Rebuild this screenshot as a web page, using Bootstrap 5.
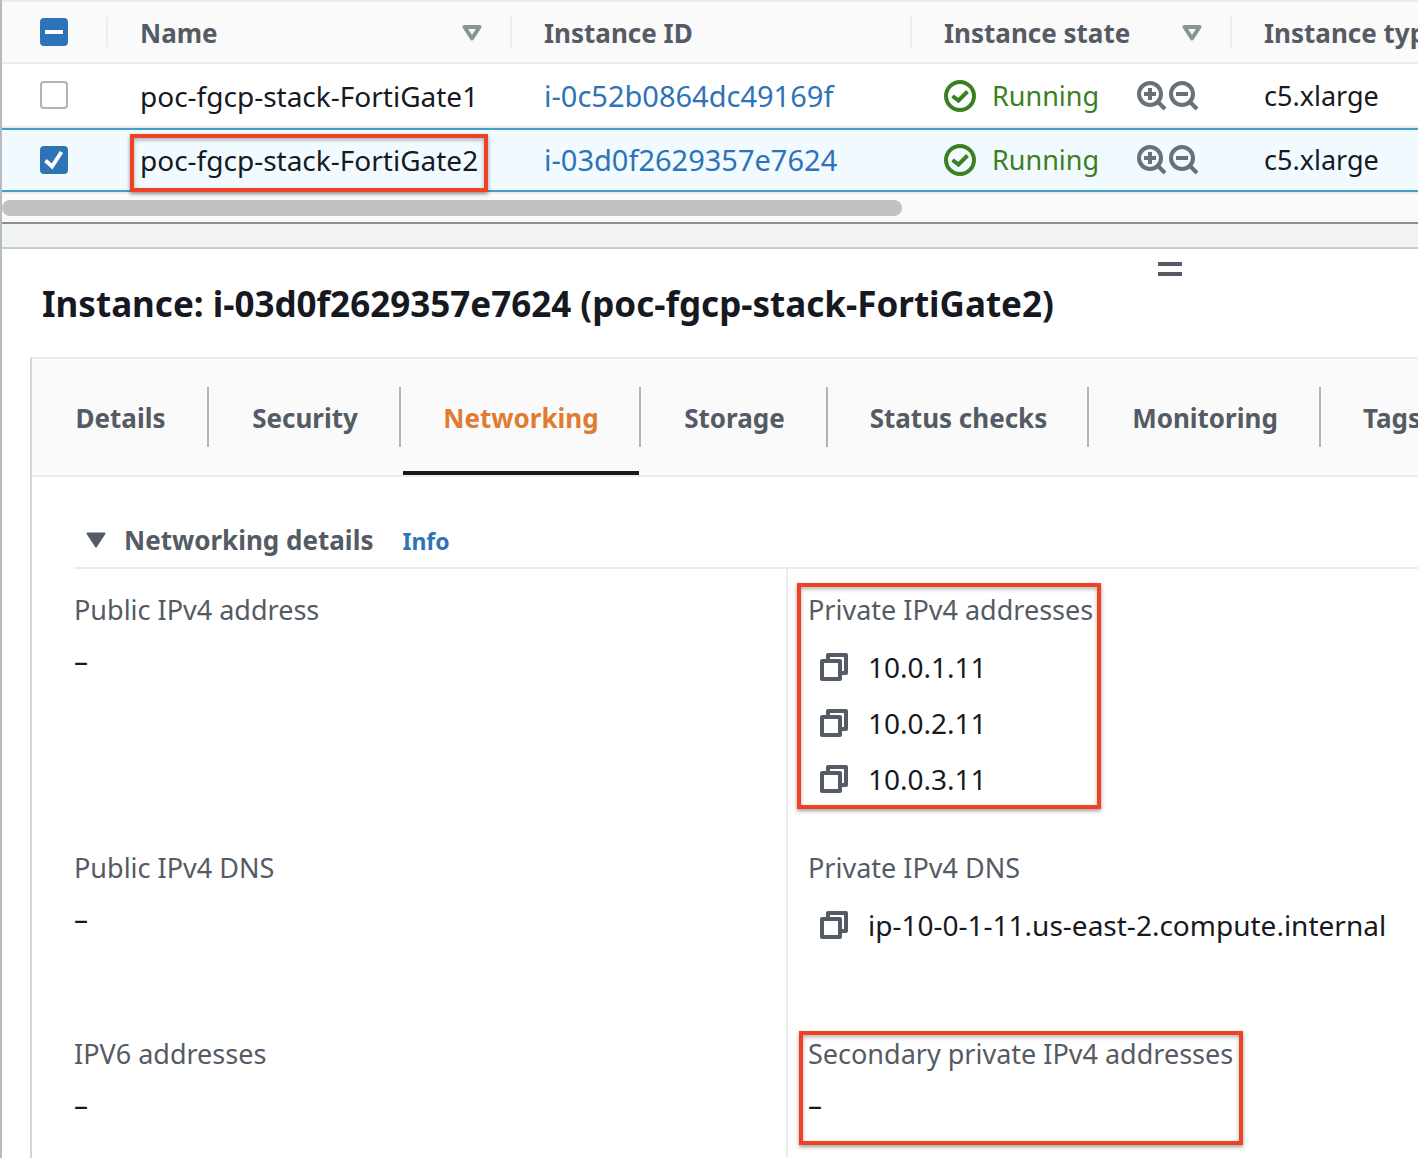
<!DOCTYPE html>
<html lang="en">
<head>
<meta charset="utf-8">
<meta name="viewport" content="width=device-width, initial-scale=1">
<title>Instances</title>
<link href="https://cdn.jsdelivr.net/npm/bootstrap@5.3.0/dist/css/bootstrap.min.css" rel="stylesheet">
<style>
:root { --ink:#16191f; --slate:#545b64; --line:#eaeded; --blue:#2e73b8; --red:#ef4123; }
body { font-family:"Noto Sans","Open Sans",sans-serif; font-size:27px; line-height:36px; color:var(--ink); min-height:100vh; overflow-x:hidden; border-left:2px solid #b5bbbf; }
a { color:var(--blue); text-decoration:none; }
svg { display:block; flex:none; }

.instances { table-layout:fixed; border-collapse:separate; border-spacing:0; margin:0; border-top:2px solid var(--line); white-space:nowrap; color:var(--ink); }
.instances th, .instances td { height:64px; padding:2px 0 0 32px; border:0; vertical-align:middle; color:inherit; overflow:hidden; position:relative; }
.instances th { height:62px; font-size:26px; background:#fafafa; color:var(--slate); border-bottom:2px solid var(--line); }
.instances td { border-bottom:2px solid var(--line); }
.instances th:not(:last-child)::after { content:""; position:absolute; right:0; top:15px; height:30px; width:2px; background:var(--line); }
.instances .pick-col { padding:0 0 0 38px; }
.instances .chosen td { background:#f1faff; padding-top:0; border-top:2px solid #479fc8; border-bottom:2px solid #479fc8; overflow:visible; }
.instances .chosen td:first-child { box-shadow:-2px 0 #3d86a8; }
.instances .res-name { font-size:28px; }
.instances .res-id { font-size:29px; }
.w-pick { width:106px; } .w-name { width:404px; } .w-id { width:400px; } .w-state { width:320px; }
.form-check-input { display:block; width:28px; height:28px; margin:0; border:2px solid #aab7b8; border-radius:4px; }
.form-check-input[type=checkbox] { border-radius:4px; }
.form-check-input:checked, .form-check-input[type=checkbox]:indeterminate { background-color:var(--blue); border-color:var(--blue); background-size:28px 28px; background-position:center; }
.form-check-input:checked[type=checkbox] { background-image:url("data:image/svg+xml,%3Csvg xmlns='http://www.w3.org/2000/svg' viewBox='0 0 28 28'%3E%3Cpath d='M5.500 14.500l6.500 6L21.500 6' fill='none' stroke='%23fff' stroke-width='4'/%3E%3C/svg%3E"); }
.form-check-input[type=checkbox]:indeterminate { background-image:url("data:image/svg+xml,%3Csvg xmlns='http://www.w3.org/2000/svg' viewBox='0 0 28 28'%3E%3Cpath d='M5 14h18' stroke='%23fff' stroke-width='4'/%3E%3C/svg%3E"); }
.sorter { padding-right:30px; }
.running { color:#3a8020; }
.zoomers { margin-left:38px; gap:2px; }
.zoomers .btn { color:#687078; }

.track { height:32px; padding:6px 0; background:#fafafa; border-top:2px solid var(--line); border-bottom:2px solid #879196; }
.thumb { width:900px; max-width:100%; height:16px; border-radius:8px; background:#c1c1c1; }
.splitter { height:25px; background:#f2f3f3; border-bottom:2px solid #c5cccc; }

.grip { margin:12px auto 0; padding:0; width:26px; }
.grip-row { padding-left:920px; }
.panel-title { font-size:35px; line-height:46px; margin:4px 0 30px 40px; font-weight:700; white-space:nowrap; }
.sheet { margin-left:28px; border-left:2px solid #d0d5d8; border-top:2px solid var(--line); }
.tabs { background:#fafafa; height:118px; border-bottom:2px solid var(--line); overflow:hidden; }
.tabs .nav-link { position:relative; flex:none; height:116px; padding:2px 0 0; border:0; background:none; border-radius:0; font-size:26px; color:var(--slate); font-weight:700; white-space:nowrap; }
.tabs .nav-link::after { content:""; position:absolute; right:0; top:28px; width:2px; height:60px; background:#aab7b8; }
.tabs .nav-link.active { color:#e07b2f; }
.tabs .nav-link.active::before { content:""; position:absolute; left:2px; right:2px; bottom:0; height:4px; background:#16191f; }
.t-details{width:177px}.t-security{width:192px}.t-network{width:240px}.t-storage{width:187px}.t-status{width:261px}.t-monitor{width:232px}.t-tags{width:142px}
.sec-head { margin-left:42px; padding:44px 0 8px 12px; height:92px; border-bottom:2px solid var(--line); }
.sec-title { font-size:26px; line-height:36px; font-weight:700; color:var(--slate); margin:0 29px 0 18px; }
.info { font-size:23px; font-weight:700; padding-top:2px; }
.pairs { margin:0 0 0 42px; display:grid; grid-template-columns:712px 1fr; grid-template-rows:max-content max-content 1fr; }
.pair { min-height:186px; padding:0 0 42px; white-space:nowrap; }
.pair:nth-child(-n+2) { padding-top:22px; }
.pair:nth-last-child(-n+2) { min-height:0; padding-bottom:30px; }
.pair:nth-child(even) { border-left:2px solid var(--line); padding-left:20px; }
.pair dt { font-weight:400; line-height:38px; color:var(--slate); margin-bottom:10px; }
.pair dd { margin:0; font-size:28px; line-height:42px; }
.pair .copyable { height:56px; padding-left:12px; gap:20px; color:var(--ink); }
.copyable .btn { color:var(--slate); }

/* highlight frames laid over the content */
.flagged { position:relative; }
.flag { position:absolute; border:4px solid var(--red); box-shadow:0 2px 4px rgba(0,0,0,.4), inset 0 2px 4px rgba(0,0,0,.3); pointer-events:none; }
.flag-name { left:22px; right:24px; top:4px; bottom:-2px; z-index:2; }
.flag-ips { left:9px; width:304px; top:14px; height:226px; }
.flag-sec { left:11px; width:444px; top:-4px; height:114px; }
</style>
<script src="https://cdn.jsdelivr.net/npm/bootstrap@5.3.0/dist/js/bootstrap.bundle.min.js"></script>
</head>
<body class="bg-white d-flex flex-column">
<svg class="d-none" aria-hidden="true">
  <symbol id="sort" viewBox="0 0 20 16"><path d="M2.500 2h15L10 13.500z" fill="none" stroke="#879596" stroke-width="4" stroke-linejoin="round"/></symbol>
  <symbol id="ok" viewBox="0 0 32 32"><g fill="none" stroke="currentColor" stroke-width="4"><circle cx="16" cy="16" r="14"/><path d="M8.500 16l6 4.500L23.500 11.500"/></g></symbol>
  <symbol id="zin" viewBox="0 0 30 30"><g fill="none" stroke="currentColor" stroke-width="4"><circle cx="13" cy="13" r="11"/><path d="M21 21l7 7M13 7v12M7 13h12"/></g></symbol>
  <symbol id="zout" viewBox="0 0 30 30"><g fill="none" stroke="currentColor" stroke-width="4"><circle cx="13" cy="13" r="11"/><path d="M21 21l7 7M7 13h12"/></g></symbol>
  <symbol id="copy" viewBox="0 0 28 28"><g fill="none" stroke="currentColor" stroke-width="4" stroke-linejoin="round"><path d="M2 8h18v18H2z"/><path d="M8 8V2h18v18h-6"/></g></symbol>
</svg>

<table class="table instances">
  <colgroup><col class="w-pick"><col class="w-name"><col class="w-id"><col class="w-state"><col></colgroup>
  <thead>
    <tr>
      <th class="pick-col"><input class="form-check-input" type="checkbox" id="pick-all" aria-label="Select all instances"></th>
      <th><div class="d-flex align-items-center justify-content-between sorter">Name<button class="btn p-0 border-0" aria-label="Sort by name"><svg width="20" height="16"><use href="#sort"/></svg></button></div></th>
      <th>Instance ID</th>
      <th><div class="d-flex align-items-center justify-content-between sorter">Instance state<button class="btn p-0 border-0" aria-label="Sort by state"><svg width="20" height="16"><use href="#sort"/></svg></button></div></th>
      <th>Instance type</th>
    </tr>
  </thead>
  <tbody>
    <tr>
      <td class="pick-col"><input class="form-check-input" type="checkbox" aria-label="Select FortiGate1"></td>
      <td class="res-name">poc-fgcp-stack-FortiGate1</td>
      <td class="res-id"><a href="#">i-0c52b0864dc49169f</a></td>
      <td><div class="d-flex align-items-center"><svg class="running" width="32" height="32"><use href="#ok"/></svg><span class="running ms-3">Running</span><span class="zoomers d-flex"><button class="btn p-0 border-0" aria-label="Include state"><svg width="30" height="30"><use href="#zin"/></svg></button><button class="btn p-0 border-0" aria-label="Exclude state"><svg width="30" height="30"><use href="#zout"/></svg></button></span></div></td>
      <td>c5.xlarge</td>
    </tr>
    <tr class="chosen">
      <td class="pick-col"><input class="form-check-input" type="checkbox" checked aria-label="Select FortiGate2"></td>
      <td class="res-name">poc-fgcp-stack-FortiGate2<span class="flag flag-name"></span></td>
      <td class="res-id"><a href="#">i-03d0f2629357e7624</a></td>
      <td><div class="d-flex align-items-center"><svg class="running" width="32" height="32"><use href="#ok"/></svg><span class="running ms-3">Running</span><span class="zoomers d-flex"><button class="btn p-0 border-0" aria-label="Include state"><svg width="30" height="30"><use href="#zin"/></svg></button><button class="btn p-0 border-0" aria-label="Exclude state"><svg width="30" height="30"><use href="#zout"/></svg></button></span></div></td>
      <td>c5.xlarge</td>
    </tr>
  </tbody>
</table>
<div class="track"><div class="thumb"></div></div>
<div class="splitter"></div>

<main class="flex-grow-1 d-flex flex-column">
  <div class="grip-row d-flex"><button class="btn border-0 grip" aria-label="Resize panel"><svg width="26" height="16" viewBox="0 0 26 16"><path d="M1 3h24M1 13h24" stroke="#545b64" stroke-width="4"/></svg></button></div>
  <h1 class="panel-title">Instance: i-03d0f2629357e7624 (poc-fgcp-stack-FortiGate2)</h1>
  <section class="sheet flex-grow-1 d-flex flex-column">
    <nav class="nav tabs flex-nowrap">
      <button class="nav-link t-details">Details</button>
      <button class="nav-link t-security">Security</button>
      <button class="nav-link t-network active" aria-current="page">Networking</button>
      <button class="nav-link t-storage">Storage</button>
      <button class="nav-link t-status">Status checks</button>
      <button class="nav-link t-monitor">Monitoring</button>
      <button class="nav-link t-tags">Tags</button>
    </nav>
    <div class="sec-head d-flex align-items-center">
      <button class="btn p-0 border-0" aria-label="Collapse networking details"><svg width="20" height="16" viewBox="0 0 20 16"><path d="M1.500 1.500h17L10 14.500z" fill="#545b64" stroke="#545b64" stroke-width="2" stroke-linejoin="round"/></svg></button>
      <h2 class="sec-title">Networking details</h2>
      <a class="info" href="#">Info</a>
    </div>
    <dl class="pairs flex-grow-1">
      <div class="pair"><dt>Public IPv4 address</dt><dd>–</dd></div>
      <div class="pair flagged"><dt>Private IPv4 addresses</dt>
        <dd class="copyable d-flex align-items-center"><button class="btn p-0 border-0" aria-label="Copy"><svg width="28" height="28"><use href="#copy"/></svg></button>10.0.1.11</dd>
        <dd class="copyable d-flex align-items-center"><button class="btn p-0 border-0" aria-label="Copy"><svg width="28" height="28"><use href="#copy"/></svg></button>10.0.2.11</dd>
        <dd class="copyable d-flex align-items-center"><button class="btn p-0 border-0" aria-label="Copy"><svg width="28" height="28"><use href="#copy"/></svg></button>10.0.3.11</dd>
        <span class="flag flag-ips"></span></div>
      <div class="pair"><dt>Public IPv4 DNS</dt><dd>–</dd></div>
      <div class="pair"><dt>Private IPv4 DNS</dt>
        <dd class="copyable d-flex align-items-center"><button class="btn p-0 border-0" aria-label="Copy"><svg width="28" height="28"><use href="#copy"/></svg></button>ip-10-0-1-11.us-east-2.compute.internal</dd></div>
      <div class="pair"><dt>IPV6 addresses</dt><dd>–</dd></div>
      <div class="pair flagged"><dt>Secondary private IPv4 addresses</dt><dd>–</dd><span class="flag flag-sec"></span></div>
    </dl>
  </section>
</main>
<script>document.getElementById('pick-all').indeterminate = true;</script>
</body>
</html>
